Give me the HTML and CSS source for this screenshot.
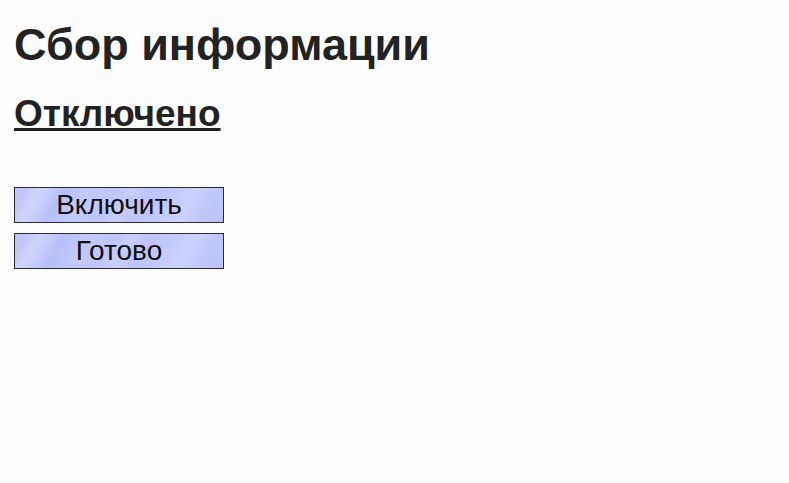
FILE: index.html
```html
<!DOCTYPE html>
<html lang="ru">
<head>
<meta charset="utf-8">
<link rel="stylesheet" href="styles.css">
</head>
<body>
<main class="page">
  <h1 class="title">Сбор информации</h1>
  <h2 class="status">Отключено</h2>
  <div class="actions">
    <button class="btn">Включить</button>
    <button class="btn">Готово</button>
  </div>
</main>
</body>
</html>
```
FILE: styles.css
```css
html, body {
  margin: 0;
  padding: 0;
  background: #fefdfd;
}
.page {
  padding: 19px 14px;
  font-family: "Liberation Sans", Arial, sans-serif;
  color: #222;
}
.title {
  margin: 0;
  font-size: 45px;
  font-weight: bold;
  line-height: 52px;
}
.status {
  margin: 21px 0 0;
  font-size: 37px;
  font-weight: bold;
  line-height: 44px;
  text-decoration: underline;
}
.actions {
  margin-top: 51px;
  display: flex;
  flex-direction: column;
  gap: 10px;
  align-items: flex-start;
}
.btn {
  width: 210px;
  height: 36px;
  padding: 0;
  border: 1px solid #2a2a33;
  font-family: "Liberation Sans", Arial, sans-serif;
  font-size: 28px;
  line-height: 34px;
  color: #111;
  background:
    linear-gradient(120deg,
      #bfc5fa 0%, #c2c8fb 6%, #d0d4fc 11%, #c6ccfb 16%, #b9c0f8 22%,
      #c3c9fa 32%, #c0c6fa 45%, #c9cefb 52%, #bec4fa 60%,
      #c3c9fb 70%, #cdd2fc 80%, #c2c8fb 88%, #bcc2fa 100%);
}
```
